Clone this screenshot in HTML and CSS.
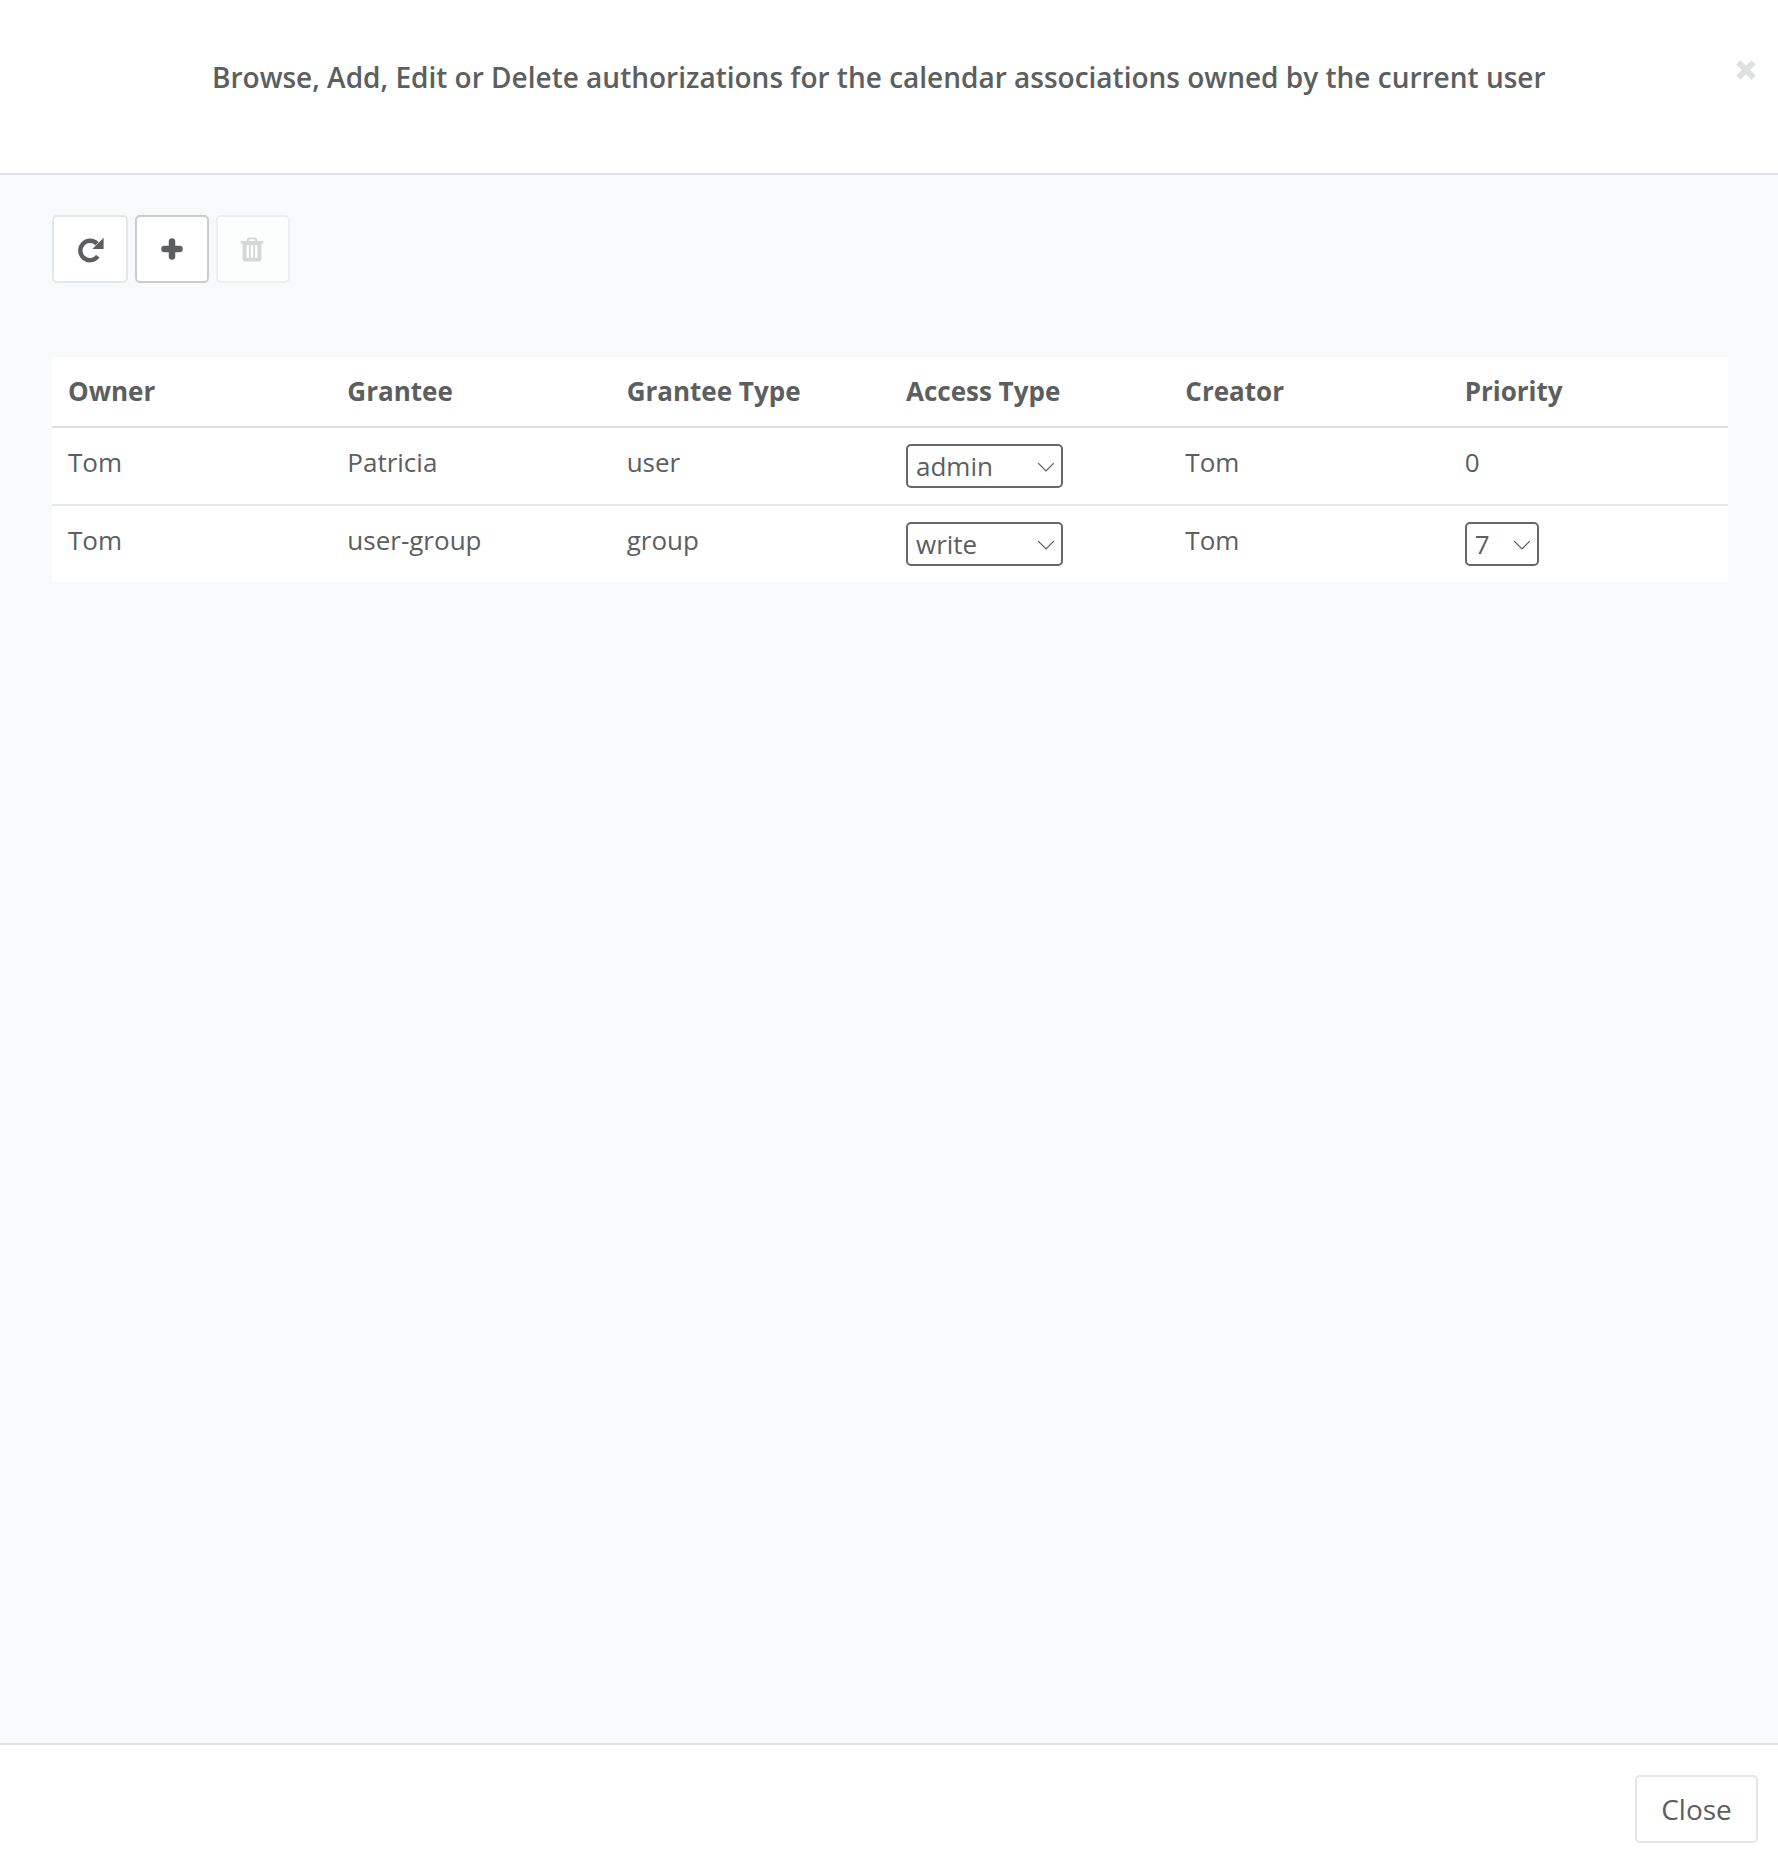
FILE: index.html
```html
<!DOCTYPE html>
<html lang="en">
<head>
<meta charset="utf-8">
<title>Authorizations</title>
<link rel="stylesheet" href="styles.css">
</head>
<body>
<div class="modal">
  <header class="modal-header">
    <h5 class="modal-title">Browse, Add, Edit or Delete authorizations for the calendar associations owned by the current user</h5>
    <svg class="close-x" viewBox="0 0 20 20" aria-label="Close"><path d="M3 6l3-3 4 4 4-4 3 3-4 4 4 4-3 3-4-4-4 4-3-3 4-4z"/></svg>
  </header>
  <main class="modal-body">
    <div class="toolbar">
      <button class="btn tool" type="button" aria-label="Refresh">
        <svg class="icon refresh" viewBox="0 0 29 29"><path d="M21.800 21.300A9.700 9.700 0 1 1 21 8.800" fill="none" stroke="currentColor" stroke-width="4.400"/><path d="M27.600 2.800V14H16.400z" fill="currentColor"/></svg>
      </button>
      <button class="btn tool tool-focus" type="button" aria-label="Add">
        <svg class="icon plus" viewBox="0 0 24 24"><path d="M12 4.500v15M4.500 12h15" fill="none" stroke="currentColor" stroke-width="6.500" stroke-linecap="round"/></svg>
      </button>
      <button class="btn tool tool-disabled" type="button" aria-label="Delete">
        <svg class="icon trash" viewBox="0 0 24 24"><path fill-rule="evenodd" d="M1.500 4.500h5.300l1.400-3.200h7.600l1.400 3.200h5.300v2.200h-1.800v14.500a2.300 2.300 0 0 1-2.300 2.300H5.600a2.300 2.300 0 0 1-2.300-2.300V6.700H1.500zM9.200 4.500h5.600l-.7-1.400H9.900zM7 8.500v11.800h2.200V8.500zM10.900 8.500v11.800h2.200V8.500zM14.800 8.500v11.800H17V8.500z" fill="currentColor"/></svg>
      </button>
    </div>
    <table class="grid">
      <thead>
        <tr><th>Owner</th><th>Grantee</th><th>Grantee Type</th><th>Access Type</th><th>Creator</th><th>Priority</th></tr>
      </thead>
      <tbody>
        <tr>
          <td>Tom</td><td>Patricia</td><td>user</td>
          <td><span class="select-wrap access"><select><option>admin</option><option>write</option><option>read</option></select><svg class="chev" viewBox="0 0 16 9"><path d="M1 1l7 7 7-7" fill="none" stroke="currentColor" stroke-width="1.200"/></svg></span></td>
          <td>Tom</td><td>0</td>
        </tr>
        <tr>
          <td>Tom</td><td>user-group</td><td>group</td>
          <td><span class="select-wrap access"><select><option>write</option><option>admin</option><option>read</option></select><svg class="chev" viewBox="0 0 16 9"><path d="M1 1l7 7 7-7" fill="none" stroke="currentColor" stroke-width="1.200"/></svg></span></td>
          <td>Tom</td>
          <td><span class="select-wrap priority"><select><option>7</option><option>0</option></select><svg class="chev" viewBox="0 0 16 9"><path d="M1 1l7 7 7-7" fill="none" stroke="currentColor" stroke-width="1.200"/></svg></span></td>
        </tr>
      </tbody>
    </table>
  </main>
  <footer class="modal-footer">
    <button class="btn close-btn" type="button">Close</button>
  </footer>
</div>
</body>
</html>
```
FILE: styles.css
```css
* { box-sizing: border-box; }
html, body { margin: 0; height: 100%; }
body {
  font-family: "Open Sans", "Noto Sans", sans-serif;
  font-size: 26px;
  line-height: 38px;
  color: #5c5e60;
  background: #fff;
}
.modal { display: flex; flex-direction: column; height: 1866px; }
.modal-header {
  position: relative;
  height: 175px;
  flex: none;
  border-bottom: 2px solid #dee2e6;
  padding: 57px 212px 0;
}
.modal-title { margin: 0; font-size: 28px; font-weight: 600; line-height: 40px; white-space: nowrap; }
.close-x { position: absolute; left: 1732px; top: 56px; width: 28px; height: 28px; fill: #dfe0e0; }
.modal-body { flex: 1; background: #f8f9fb; padding: 40px 50px 0 52px; }
.toolbar { display: flex; gap: 7px; margin-bottom: 74px; }
.btn {
  font: inherit;
  color: inherit;
  background: #fff;
  border: 2px solid #e4e7ea;
  border-radius: 5px;
  padding: 0;
}
.tool { width: 76px; height: 68px; display: flex; align-items: center; justify-content: center; }
.tool-focus { width: 74px; border-color: #c9cbcd; }
.tool-disabled { width: 74px; background: #fcfdfd; border-color: #eceef0; color: #d6d7d7; }
.icon { width: 26px; height: 26px; }
.refresh { width: 29px; height: 29px; }
.plus { width: 24px; height: 24px; }
.trash { margin-right: 3px; }
.grid { width: 1676px; border-collapse: collapse; table-layout: fixed; background: #fff; }
.grid th {
  text-align: left;
  font-weight: 700;
  height: 70px;
  padding: 0 16px 2px;
  border-bottom: 2px solid #dcdddf;
}
.grid td {
  height: 78px;
  padding: 15px 16px 0;
  vertical-align: top;
  line-height: 38px;
}
.grid tbody tr + tr td { height: 77px; border-top: 2px solid #e4e7ea; }
.select-wrap { position: relative; display: block; height: 44px; margin-top: 1px; }
.select-wrap.access { width: 157px; }
.select-wrap.priority { width: 74px; }
.select-wrap select {
  appearance: none;
  -webkit-appearance: none;
  width: 100%;
  height: 44px;
  margin: 0;
  padding: 0 30px 0 8px;
  font: inherit;
  line-height: 38px;
  color: inherit;
  background: #fff;
  border: 2px solid #676767;
  border-radius: 5px;
}
.chev { position: absolute; right: 7px; top: 18px; width: 20px; height: 10px; color: #5c5e60; pointer-events: none; }
.modal-footer {
  flex: none;
  height: 123px;
  border-top: 2px solid #dee2e6;
  display: flex;
  justify-content: flex-end;
  padding: 30px 20px 0 0;
}
.close-btn { width: 123px; height: 68px; font-size: 28px; }
```
